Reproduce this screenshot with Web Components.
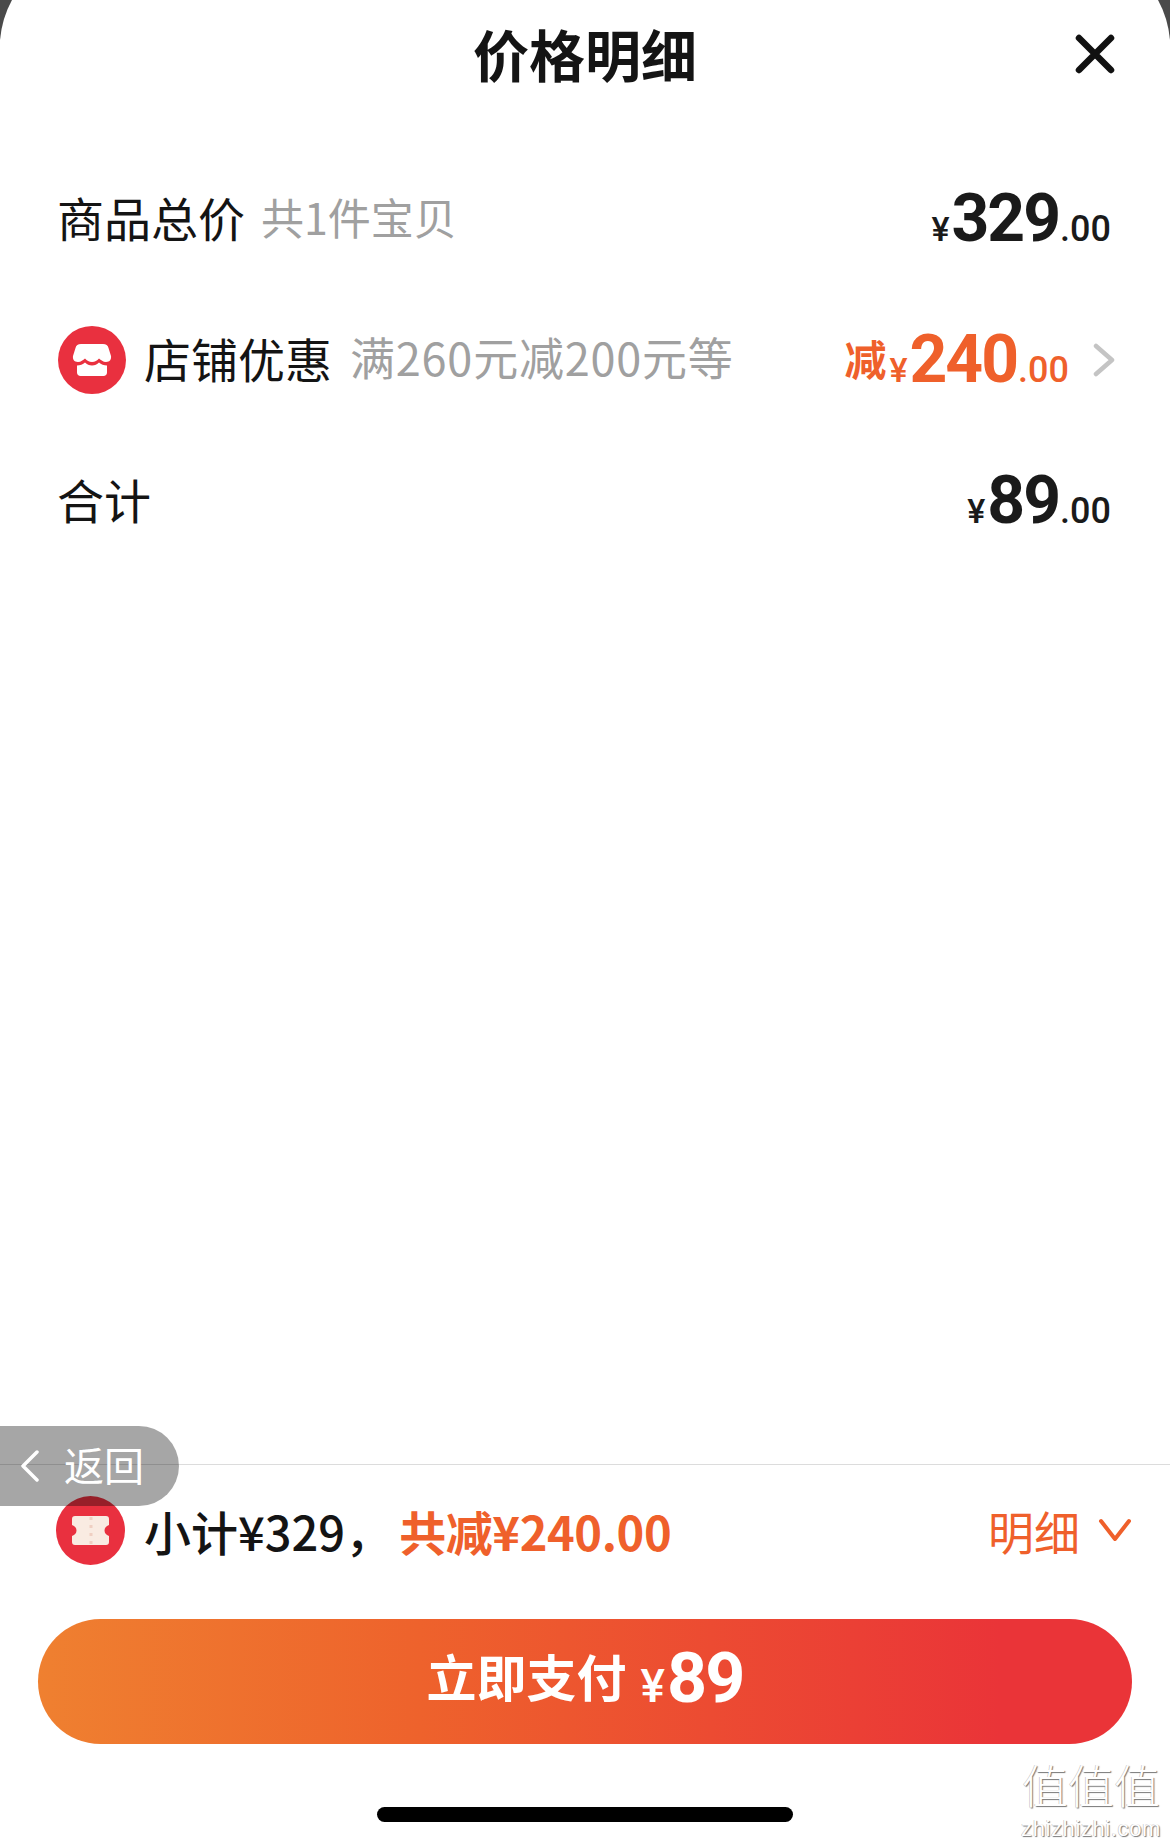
<!DOCTYPE html>
<html lang="zh">
<head>
<meta charset="utf-8">
<title>价格明细</title>
<style>
  html, body { margin: 0; padding: 0; background: #4a4a4a; }
  body {
    width: 1170px;
    height: 1846px;
    overflow: hidden;
    font-family: "Noto Sans CJK SC", "Liberation Sans", sans-serif;
    color: #141414;
  }
</style>
</head>
<body>
<price-sheet>
  <sheet-header slot="header">价格明细</sheet-header>

  <price-row>
    <span slot="label">商品总价</span>
    <span slot="note" style="font-size:43px;margin-left:-2px">共1件宝贝</span>
    <price-amount slot="amount" cents=".00">329</price-amount>
  </price-row>

  <price-row arrow>
    <store-icon slot="icon"></store-icon>
    <span slot="label">店铺优惠</span>
    <span slot="note" style="letter-spacing:.8px">满260元减200元等</span>
    <price-amount slot="amount" cents=".00" prefix="减" color="#ef602b">240</price-amount>
  </price-row>

  <price-row>
    <span slot="label">合计</span>
    <price-amount slot="amount" cents=".00">89</price-amount>
  </price-row>

  <pay-summary slot="footer" subtotal="小计¥329，" saved="共减¥240.00"></pay-summary>
  <pay-button slot="footer">立即支付</pay-button>
  <home-bar slot="footer"></home-bar>

  <back-pill slot="overlay">返回</back-pill>
  <water-mark slot="overlay"></water-mark>
</price-sheet>

<script>
// <price-sheet>
class PriceSheet extends HTMLElement {
  constructor() {
    super();
    this.attachShadow({mode: 'open'});
    this.shadowRoot.innerHTML = `
      <style>
        :host {
          display: flex;
          flex-direction: column;
          position: relative;
          width: 1170px;
          height: 1846px;
          box-sizing: border-box;
          background: #fff;
          overflow: hidden;
          clip-path: path('M12 0Q2 18 0 40V1846H1170V40Q1168 18 1158 0Z');
        }
        main {
          flex: 1;
          padding-top: 36px;
        }
        footer {
          border-top: 1px solid #dcdcdc;
        }
      </style>
      <slot name="header"></slot>
      <main><slot></slot></main>
      <footer><slot name="footer"></slot></footer>
      <slot name="overlay"></slot>
    `;
  }
}
customElements.define('price-sheet', PriceSheet);

// <sheet-header>
class SheetHeader extends HTMLElement {
  constructor() {
    super();
    this.attachShadow({mode: 'open'});
    this.shadowRoot.innerHTML = `
      <style>
        :host {
          display: flex;
          align-items: center;
          justify-content: center;
          position: relative;
          height: 112px;
          box-sizing: border-box;
          padding-bottom: 8px;
          font-size: 56px;
          font-weight: 700;
          color: #141414;
        }
        svg {
          position: absolute;
          right: 55px;
          top: 33px;
        }
      </style>
      <slot></slot>
      <svg width="40" height="42" viewBox="0 0 40 42" fill="none" stroke="#111" stroke-width="6.5" stroke-linecap="round">
        <path d="M4 5L36 37M36 5L4 37"/>
      </svg>
    `;
  }
}
customElements.define('sheet-header', SheetHeader);

// <price-row>
class PriceRow extends HTMLElement {
  constructor() {
    super();
    this.attachShadow({mode: 'open'});
  }

  connectedCallback() {
    const arrow = this.hasAttribute('arrow');
    this.shadowRoot.innerHTML = `
      <style>
        :host {
          display: flex;
          align-items: center;
          height: 141px;
          padding: 0 59px 0 57px;
          box-sizing: border-box;
        }
        .label {
          font-size: 47px;
          color: #141414;
          padding-bottom: 5px;
        }
        .note {
          font-size: 45px;
          color: #a0a0a0;
          margin-left: 18px;
          padding-bottom: 6px;
        }
        .amount {
          margin-left: auto;
        }
        svg {
          margin-left: 24px;
          margin-right: -4px;
        }
        ::slotted([slot="icon"]) {
          margin-left: 1px;
          margin-right: 18px;
        }
      </style>
      <slot name="icon"></slot>
      <span class="label"><slot name="label"></slot></span>
      <span class="note"><slot name="note"></slot></span>
      <span class="amount"><slot name="amount"></slot></span>
      ${arrow ? `<svg width="22" height="34" viewBox="0 0 22 34" fill="none" stroke="#c4c4c4" stroke-width="4.5" stroke-linecap="round" stroke-linejoin="round"><path d="M3 3L19 17L3 31"/></svg>` : ''}
    `;
  }
}
customElements.define('price-row', PriceRow);

// <price-amount>
class PriceAmount extends HTMLElement {
  constructor() {
    super();
    this.attachShadow({mode: 'open'});
  }

  connectedCallback() {
    const prefix = this.getAttribute('prefix');
    const color = this.getAttribute('color') || '#1a1a1a';
    this.shadowRoot.innerHTML = `
      <style>
        :host {
          display: inline-flex;
          align-items: baseline;
          font-family: Roboto, "Noto Sans CJK SC", sans-serif;
          color: ${color};
          line-height: 1;
        }
        .prefix {
          font-family: "Noto Sans CJK SC", sans-serif;
          font-size: 42px;
          font-weight: 700;
          margin-right: 3px;
          transform: translateY(-6px);
        }
        .yen {
          font-size: 34px;
          font-weight: 500;
          margin-right: 2px;
        }
        .main {
          font-size: 66px;
          font-weight: 700;
          letter-spacing: -2px;
        }
        .cents {
          font-size: 36px;
          font-weight: 500;
          margin-left: 1px;
        }
      </style>
      ${prefix ? `<span class="prefix">${prefix}</span>` : ''}
      <span class="yen">¥</span>
      <span class="main"><slot></slot></span>
      <span class="cents">${this.getAttribute('cents') || ''}</span>
    `;
  }
}
customElements.define('price-amount', PriceAmount);

// <store-icon>
class StoreIcon extends HTMLElement {
  constructor() {
    super();
    this.attachShadow({mode: 'open'});
    this.shadowRoot.innerHTML = `
      <style>:host { display: block; width: 68px; height: 68px; }</style>
      <svg width="68" height="68" viewBox="0 0 68 68">
        <circle cx="34" cy="34" r="34" fill="#e9303f"/>
        <path fill="#fff" d="M23 18H45C48 18 50 19.500 50.500 22L53 30C53.500 33 52 36 48 36C45 36 43 34 41 32.500C39 34.500 37 36 34 36C31 36 29 34.500 27 32.500C25 34 23 36 20 36C16 36 14.500 33 15 30L17.500 22C18 19.500 20 18 23 18Z"/>
        <path fill="#fff" d="M19 39.500C22 39.500 25 38.500 27 36.500C29 38.500 31 39.500 34 39.500C37 39.500 39 38.500 41 36.500C43 38.500 46 39.500 49 39.500V46.500C49 48.500 47.500 50 45.500 50H22.500C20.500 50 19 48.500 19 46.500Z"/>
      </svg>
    `;
  }
}
customElements.define('store-icon', StoreIcon);

// <pay-summary>
class PaySummary extends HTMLElement {
  constructor() {
    super();
    this.attachShadow({mode: 'open'});
  }

  connectedCallback() {
    this.shadowRoot.innerHTML = `
      <style>
        :host {
          display: flex;
          align-items: center;
          height: 154px;
          padding: 0 38px 24px 56px;
          box-sizing: border-box;
          font-size: 47px;
          font-weight: 500;
        }
        svg.ticket { margin-right: 19px; }
        .saved {
          color: #ef602b;
          font-weight: 700;
          letter-spacing: -.4px;
          margin-left: 7px;
        }
        .detail {
          margin-left: auto;
          display: flex;
          align-items: center;
          gap: 18px;
          color: #ef602b;
          font-size: 46px;
          font-weight: 400;
        }
      </style>
      <svg class="ticket" width="69" height="69" viewBox="0 0 69 69">
        <circle cx="34.500" cy="34.500" r="34.500" fill="#e9303f"/>
        <path fill="#f9ebe2" d="M19 20H50C52 20 53 21 53 23V29C50 30 48.500 32 48.500 34.500C48.500 37 50 39 53 40V46C53 48 52 49 50 49H19C17 49 16 48 16 46V40C19 39 20.500 37 20.500 34.500C20.500 32 19 30 16 29V23C16 21 17 20 19 20Z"/>
        <path stroke="#efcfc2" stroke-width="3" stroke-dasharray="3 5" d="M35 21V49"/>
      </svg>
      <span>${this.getAttribute('subtotal')}</span>
      <span class="saved">${this.getAttribute('saved')}</span>
      <span class="detail">明细
        <svg width="34" height="24" viewBox="0 0 34 24" fill="none" stroke="#ef602b" stroke-width="4" stroke-linecap="round" stroke-linejoin="round"><path d="M3 3L17 21L31 3"/></svg>
      </span>
    `;
  }
}
customElements.define('pay-summary', PaySummary);

// <pay-button>
class PayButton extends HTMLElement {
  constructor() {
    super();
    this.attachShadow({mode: 'open'});
    this.shadowRoot.innerHTML = `
      <style>
        :host {
          display: flex;
          align-items: baseline;
          justify-content: center;
          height: 125px;
          line-height: 119px;
          margin: 0 38px;
          border-radius: 63px;
          background: linear-gradient(90deg, #ef8030 0%, #ee622c 35%, #ea3438 88%);
          color: #fff;
          font-size: 50px;
          font-weight: 700;
        }
        .label {
          transform: translateY(-5px);
        }
        .yen {
          font-family: Roboto, sans-serif;
          font-size: 46px;
          font-weight: 500;
          margin-left: 14px;
        }
        .total {
          font-family: Roboto, sans-serif;
          font-size: 70px;
          font-weight: 700;
          letter-spacing: -2px;
          margin-left: 2px;
        }
      </style>
      <span class="label"><slot></slot></span>
      <span class="yen">¥</span><span class="total">89</span>
    `;
  }
}
customElements.define('pay-button', PayButton);

// <home-bar>
class HomeBar extends HTMLElement {
  constructor() {
    super();
    this.attachShadow({mode: 'open'});
    this.shadowRoot.innerHTML = `
      <style>
        :host {
          display: block;
          height: 102px;
          box-sizing: border-box;
          padding-top: 63px;
        }
        div {
          width: 416px;
          height: 15px;
          margin: 0 auto;
          border-radius: 8px;
          background: #000;
        }
      </style>
      <div></div>
    `;
  }
}
customElements.define('home-bar', HomeBar);

// <back-pill>
class BackPill extends HTMLElement {
  constructor() {
    super();
    this.attachShadow({mode: 'open'});
    this.shadowRoot.innerHTML = `
      <style>
        :host {
          position: absolute;
          left: 0;
          top: 1426px;
          width: 179px;
          height: 80px;
          display: flex;
          align-items: center;
          box-sizing: border-box;
          padding-left: 21px;
          gap: 25px;
          border-radius: 0 40px 40px 0;
          background: rgba(0, 0, 0, .35);
          color: #fff;
          font-size: 40px;
        }
        span { padding-bottom: 5px; }
      </style>
      <svg width="18" height="32" viewBox="0 0 18 32" fill="none" stroke="#fff" stroke-width="3.500" stroke-linecap="round" stroke-linejoin="round"><path d="M16 2L2 16L16 30"/></svg>
      <span><slot></slot></span>
    `;
  }
}
customElements.define('back-pill', BackPill);

// <water-mark>
class WaterMark extends HTMLElement {
  constructor() {
    super();
    this.attachShadow({mode: 'open'});
    this.shadowRoot.innerHTML = `
      <style>
        :host {
          position: absolute;
          right: 6px;
          top: 1755px;
          width: 146px;
          color: #fff;
          text-align: center;
          text-shadow: 1px 1px 1px #777, -.5px -.5px 0 #bbb;
        }
        .cn {
          font-size: 46px;
          line-height: 56px;
          font-weight: 300;
        }
        .en {
          font-family: "Liberation Sans", sans-serif;
          font-size: 22px;
          line-height: 36px;
          letter-spacing: .6px;
        }
      </style>
      <div class="cn">值值值</div>
      <div class="en">zhizhizhi.com</div>
    `;
  }
}
customElements.define('water-mark', WaterMark);
</script>
</body>
</html>
